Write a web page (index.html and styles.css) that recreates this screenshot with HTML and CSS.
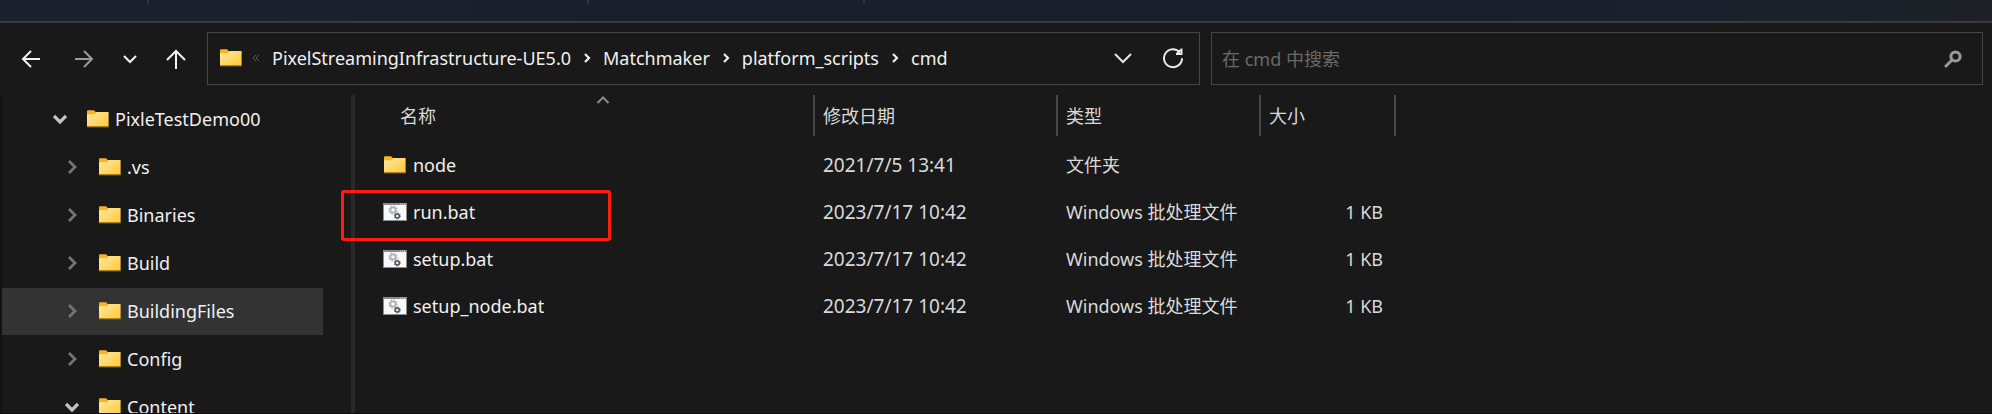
FILE: index.html
```html
<!DOCTYPE html>
<html lang="zh-CN">
<head>
<meta charset="utf-8">
<title>cmd</title>
<link rel="stylesheet" href="styles.css">
</head>
<body>
<svg class="defs" aria-hidden="true">
  <defs>
    <linearGradient id="folder-face" x1="0" y1="0" x2="1" y2="1">
      <stop offset="0" stop-color="#ffe9a2"/>
      <stop offset="1" stop-color="#ffc937"/>
    </linearGradient>
    <symbol id="folder" viewBox="0 0 24 20">
      <path d="M1 2.2Q1 1.2 2 1.2H8L10 3.2V8H1Z" fill="#fbb41c"/>
      <path d="M1 5.2H8.6L10.4 3H22.6V17.6H1Z" fill="url(#folder-face)"/>
      <path d="M1 17.8H22.8" stroke="#b58520" stroke-width="1"/>
    </symbol>
    <symbol id="bat" viewBox="0 0 24 20">
      <path d="M0 1H24V19H0Z" fill="#8b8b8b"/>
      <path d="M1 3H23V18H1Z" fill="#f9f9f9"/>
      <path d="M17 2H18M19 2H20M21 2H22" stroke="#d8d8d8"/>
      <circle cx="10" cy="8" r="2.7" fill="none" stroke="#aab4bd" stroke-width="1.8"/>
      <circle cx="10" cy="8" r="4" fill="none" stroke="#aab4bd" stroke-width="1.2" stroke-dasharray="1.6 1.54"/>
      <circle cx="14.3" cy="14" r="2" fill="none" stroke="#4b535b" stroke-width="1.5"/>
      <circle cx="14.3" cy="14" r="3" fill="none" stroke="#4b535b" stroke-width="1" stroke-dasharray="1.2 1.16"/>
    </symbol>
    <symbol id="closed" viewBox="0 0 14 14"><path d="M4 1L10 7L4 13" fill="none" stroke="#747474" stroke-width="2.8"/></symbol>
    <symbol id="open" viewBox="0 0 14 14"><path d="M1 4L7 10L13 4" fill="none" stroke="#c4c4c4" stroke-width="3.2"/></symbol>
    <symbol id="sep" viewBox="0 0 8 12"><path d="M2 2L6 6L2 10" fill="none" stroke="#f0f0f0" stroke-width="2.2"/></symbol>
  </defs>
</svg>
<div class="window">
  <div class="tabs"><span class="tab"></span><span class="tab tab-wide"></span><span class="tab"></span></div>
  <header class="toolbar">
    <nav class="history">
      <button class="nav-btn back" aria-label="后退"><svg width="20" height="20" viewBox="0 0 20 20"><path d="M19 10H2M10 2L2 10L10 18"/></svg></button>
      <button class="nav-btn forward" aria-label="前进"><svg width="20" height="20" viewBox="0 0 20 20"><path d="M1 10H18M10 2L18 10L10 18"/></svg></button>
      <button class="nav-btn recent" aria-label="最近"><svg width="16" height="20" viewBox="0 0 16 20"><path d="M2 7L8 13L14 7"/></svg></button>
      <button class="nav-btn" aria-label="向上"><svg width="20" height="20" viewBox="0 0 20 20"><path d="M10 20V2M1 11L10 2L19 11"/></svg></button>
    </nav>
    <div class="address">
      <svg class="icon"><use href="#folder"/></svg>
      <span class="more"><svg width="8" height="8" viewBox="0 0 8 8"><path d="M4 1L1 4L4 7M7 1L4 4L7 7"/></svg></span>
      <nav class="crumbs">
        <a href="#">PixelStreamingInfrastructure-UE5.0</a><svg class="sep"><use href="#sep"/></svg>
        <a href="#">Matchmaker</a><svg class="sep"><use href="#sep"/></svg>
        <a href="#">platform_scripts</a><svg class="sep"><use href="#sep"/></svg>
        <a href="#">cmd</a>
      </nav>
      <button class="box-btn" aria-label="历史记录"><svg width="20" height="20" viewBox="0 0 20 20"><path d="M2 6L10 14L18 6"/></svg></button>
      <button class="box-btn" aria-label="刷新"><svg width="22" height="22" viewBox="0 0 22 22"><path d="M17.9 5.4A9 9 0 1 0 20 11.2"/><path d="M19.5 1.5V7H14M19.5 2.5L15 6.5"/></svg></button>
    </div>
    <form class="search">
      <input class="search-input" type="text" aria-label="搜索" placeholder="在 cmd 中搜索">
      <button class="box-btn" type="button" aria-label="搜索"><svg width="18" height="18" viewBox="0 0 18 18"><g fill="none" stroke="#9a9a9a"><circle cx="11.5" cy="6.5" r="4.6" stroke-width="3"/><path d="M8 10L2 16" stroke-linecap="round"/></g></svg></button>
    </form>
  </header>
  <div class="body">
    <aside class="sidebar">
      <ul class="tree">
        <li class="node root"><svg class="twist"><use href="#open"/></svg><svg class="icon"><use href="#folder"/></svg><span>PixleTestDemo00</span></li>
        <li class="node"><svg class="twist"><use href="#closed"/></svg><svg class="icon"><use href="#folder"/></svg><span>.vs</span></li>
        <li class="node"><svg class="twist"><use href="#closed"/></svg><svg class="icon"><use href="#folder"/></svg><span>Binaries</span></li>
        <li class="node"><svg class="twist"><use href="#closed"/></svg><svg class="icon"><use href="#folder"/></svg><span>Build</span></li>
        <li class="node selected"><svg class="twist"><use href="#closed"/></svg><svg class="icon"><use href="#folder"/></svg><span>BuildingFiles</span></li>
        <li class="node"><svg class="twist"><use href="#closed"/></svg><svg class="icon"><use href="#folder"/></svg><span>Config</span></li>
        <li class="node"><svg class="twist"><use href="#open"/></svg><svg class="icon"><use href="#folder"/></svg><span>Content</span></li>
      </ul>
    </aside>
    <main class="files">
      <table class="list">
        <colgroup><col class="c-name"><col class="c-date"><col class="c-type"><col class="c-size"></colgroup>
        <thead>
          <tr><th class="first">名称<svg class="sort" width="14" height="8" viewBox="0 0 14 8"><path d="M1.500 7L7 1.500L12.500 7"/></svg></th><th>修改日期</th><th>类型</th><th>大小</th></tr>
        </thead>
        <tbody>
          <tr><td><div class="file"><svg class="icon"><use href="#folder"/></svg>node</div></td><td class="date">2021/7/5 13:41</td><td>文件夹</td><td></td></tr>
          <tr><td><div class="file"><svg class="icon"><use href="#bat"/></svg>run.bat</div><div class="mark"></div></td><td class="date">2023/7/17 10:42</td><td>Windows 批处理文件</td><td class="size">1 KB</td></tr>
          <tr><td><div class="file"><svg class="icon"><use href="#bat"/></svg>setup.bat</div></td><td class="date">2023/7/17 10:42</td><td>Windows 批处理文件</td><td class="size">1 KB</td></tr>
          <tr><td><div class="file"><svg class="icon"><use href="#bat"/></svg>setup_node.bat</div></td><td class="date">2023/7/17 10:42</td><td>Windows 批处理文件</td><td class="size">1 KB</td></tr>
        </tbody>
      </table>
    </main>
  </div>
</div>
</body>
</html>
```

FILE: styles.css
```css
* { box-sizing: border-box; }

body {
  margin: 0;
  background: #191919;
  color: #f0f0f0;
  font: 18px/24px "Noto Sans", "Noto Sans CJK SC", sans-serif;
}

button {
  padding: 0;
  border: 0;
  background: none;
  color: inherit;
}

svg { display: block; flex: none; }
.defs { position: absolute; width: 0; height: 0; }

.window {
  display: flex;
  flex-direction: column;
  height: 100vh;
  overflow: hidden;
  border-bottom: 1px solid #120a12;
}

.tabs {
  display: flex;
  flex: none;
  height: 23px;
  padding-left: 147px;
  background: linear-gradient(90deg, #1b212d, #1a1f2e 30%, #1a1f2e 75%, #1b202a 90%, #1d2026);
  border-bottom: 2px solid #3a3a3a;
}
.tab { width: 276px; height: 4px; border-left: 2px solid #30343f; }
.tab-wide { order: -1; width: 440px; }

.toolbar {
  display: grid;
  grid-template-columns: 175px 993fr 772fr;
  flex: none;
  gap: 11px;
  height: 72px;
  padding: 9px 9px 10px 21px;
}

.history { display: flex; align-items: center; gap: 28px; }
.nav-btn { flex: none; }
.nav-btn.back { margin-right: 5px; }
.nav-btn path { fill: none; stroke: #f4f4f4; stroke-width: 2; }
.forward path { stroke: #9a9a9a; }

.address, .search {
  display: flex;
  align-items: center;
  min-width: 0;
  border: 1px solid #454545;
}
.address { padding: 0 15px 2px 11px; }
.search { padding: 0 20px 0 10px; }

.icon { width: 24px; height: 20px; }
.more { padding: 0 12px 0 9px; }
.more path { fill: none; stroke: #5a5a5a; }
.crumbs { display: flex; flex: 1; align-items: center; gap: 12px; white-space: nowrap; }
.crumbs a { color: inherit; text-decoration: none; }
.sep { width: 8px; height: 12px; }
.box-btn { margin-left: 29px; }
.box-btn path { fill: none; stroke: #e8e8e8; stroke-width: 2; }
.search .box-btn path { stroke: #9a9a9a; stroke-width: 3; }

.search-input {
  flex: 1;
  min-width: 0;
  padding: 0;
  border: 0;
  outline: 0;
  background: none;
  color: inherit;
  font: inherit;
}
.search-input::placeholder { color: #6a6a6a; opacity: 1; }

.body { display: flex; flex: 1; min-height: 0; }

.sidebar {
  flex: none;
  width: 355px;
  padding: 1px 28px 0 0;
  border-left: 2px solid #121212;
  border-right: 4px solid #292929;
}
.tree { margin: 0; padding: 0; list-style: none; }
.node {
  display: flex;
  align-items: center;
  height: 48px;
  padding: 0 0 2px 63px;
}
.node.root { padding-left: 51px; }
.node.selected { padding-bottom: 1px; background: #333; border-bottom: 1px solid #191919; }
.twist { width: 14px; height: 14px; margin-right: 19px; }
.node .icon { margin-right: 5px; }

.files { flex: 1; min-width: 0; }
.list { border-collapse: collapse; table-layout: fixed; width: 1040px; }
.c-name { width: 459px; }
.c-date { width: 243px; }
.c-type { width: 203px; }
.c-size { width: 135px; }
th {
  position: relative;
  height: 41px;
  padding: 0 0 0 8px;
  border-right: 2px solid #484848;
  color: #d8d8d8;
  font-weight: 400;
  text-align: left;
}
th.first { padding-left: 45px; }
.sort { position: absolute; top: 1px; left: 50%; margin-left: 12px; }
.sort path { fill: none; stroke: #8a8a8a; stroke-width: 2; }
tbody::before { content: ""; display: block; height: 6px; }
td {
  position: relative;
  height: 47px;
  padding: 0 0 2px 9px;
  color: #dadada;
}
td:first-child { padding-left: 28px; color: #f0f0f0; }
.date { font-size: 19px; }
.file { display: flex; align-items: center; gap: 6px; }
td.size { padding-right: 12px; text-align: right; }
.mark {
  position: absolute;
  top: 1px;
  left: -14px;
  width: 270px;
  height: 51px;
  border: 3px solid #fd1d10;
  border-radius: 3px;
}
```
